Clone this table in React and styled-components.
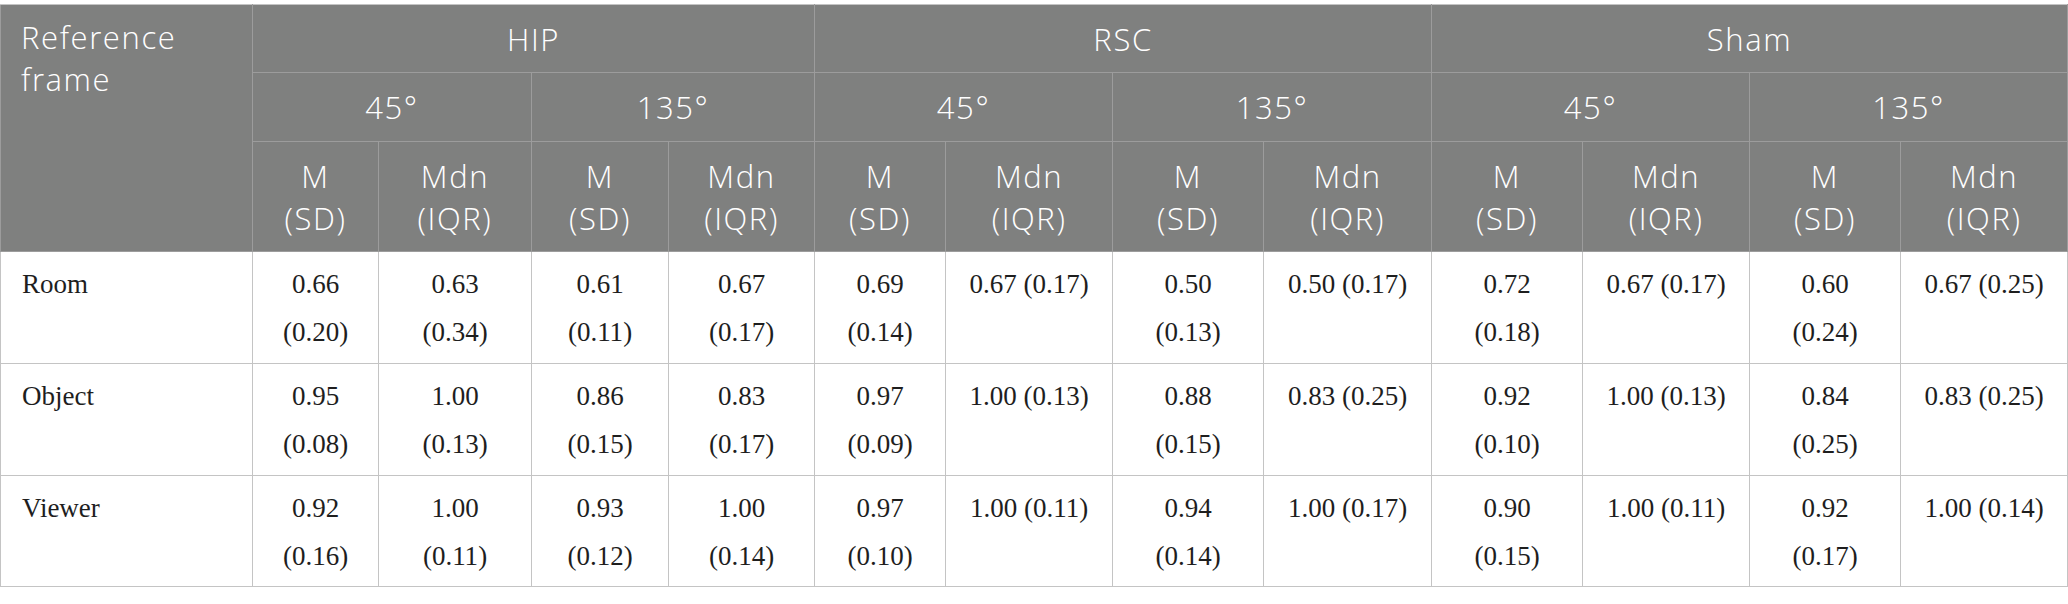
import React from "react";
import styled, { createGlobalStyle } from "styled-components";

const GlobalStyle = createGlobalStyle`
  html, body {
    margin: 0;
    padding: 0;
    background: #ffffff;
  }
  body {
    padding-top: 4px;
  }
`;

const Table = styled.table`
  width: 2067px;
  table-layout: fixed;
  border-collapse: collapse;
  border: 1px solid #c4c4c4;
`;

const HeadRow = styled.tr`
  height: ${(p) => p.$h}px;
`;

const HeadCell = styled.th`
  background: #7f807f;
  color: #ffffff;
  font-family: "Open Sans", "Noto Sans", sans-serif;
  font-weight: 350;
  font-size: 31px;
  letter-spacing: 1.6px;
  line-height: 42px;
  text-align: ${(p) => (p.$left ? "left" : "center")};
  vertical-align: ${(p) => (p.$top ? "top" : "middle")};
  padding: ${(p) => (p.$top ? "11px 20px" : "0 6px")};
  border: 1px solid #9c9c9c;
  border-top-color: #c4c4c4;
`;

const HeadLine = styled.span`
  display: block;
  white-space: nowrap;
`;

const BodyRow = styled.tr`
  height: ${(p) => p.$h}px;
`;

const Cell = styled.td`
  font-family: "Liberation Serif", "Times New Roman", serif;
  font-size: 27px;
  line-height: 48px;
  color: #1e1e1e;
  text-align: ${(p) => (p.$left ? "left" : "center")};
  vertical-align: top;
  padding: 8px 21px 0;
  border: 1px solid #c4c4c4;
`;

const Line = styled.span`
  display: block;
  white-space: nowrap;
`;

const widths = [252, 126, 153, 137, 146, 131, 167, 151, 168, 151, 167, 151, 167];

const groups = ["HIP", "RSC", "Sham"];
const angles = ["45°", "135°"];

const rows = [
  {
    name: "Room",
    values: [
      ["0.66", "0.20"], ["0.63", "0.34"], ["0.61", "0.11"], ["0.67", "0.17"],
      ["0.69", "0.14"], ["0.67", "0.17"], ["0.50", "0.13"], ["0.50", "0.17"],
      ["0.72", "0.18"], ["0.67", "0.17"], ["0.60", "0.24"], ["0.67", "0.25"],
    ],
    h: 112,
  },
  {
    name: "Object",
    values: [
      ["0.95", "0.08"], ["1.00", "0.13"], ["0.86", "0.15"], ["0.83", "0.17"],
      ["0.97", "0.09"], ["1.00", "0.13"], ["0.88", "0.15"], ["0.83", "0.25"],
      ["0.92", "0.10"], ["1.00", "0.13"], ["0.84", "0.25"], ["0.83", "0.25"],
    ],
    h: 112,
  },
  {
    name: "Viewer",
    values: [
      ["0.92", "0.16"], ["1.00", "0.11"], ["0.93", "0.12"], ["1.00", "0.14"],
      ["0.97", "0.10"], ["1.00", "0.11"], ["0.94", "0.14"], ["1.00", "0.17"],
      ["0.90", "0.15"], ["1.00", "0.11"], ["0.92", "0.17"], ["1.00", "0.14"],
    ],
    h: 111,
  },
];

// M (SD) columns and the narrow HIP median columns break onto two lines
const stacked = (i) => i % 2 === 0 || i < 4;

const App = () => {
  return (
    <>
      <GlobalStyle />
      <Table>
        <colgroup>
          {widths.map((w, i) => (
            <col key={i} style={{ width: w }} />
          ))}
        </colgroup>
        <thead>
          <HeadRow $h={68}>
            <HeadCell rowSpan={3} $left $top>
              Reference frame
            </HeadCell>
            {groups.map((g) => (
              <HeadCell key={g} colSpan={4}>
                {g}
              </HeadCell>
            ))}
          </HeadRow>
          <HeadRow $h={69}>
            {groups.map((g) =>
              angles.map((a) => (
                <HeadCell key={g + a} colSpan={2}>
                  {a}
                </HeadCell>
              ))
            )}
          </HeadRow>
          <HeadRow $h={110}>
            {groups.map((g) =>
              angles.map((a) => (
                <React.Fragment key={g + a}>
                  <HeadCell>
                    <HeadLine>M</HeadLine>
                    <HeadLine>(SD)</HeadLine>
                  </HeadCell>
                  <HeadCell>
                    <HeadLine>Mdn</HeadLine>
                    <HeadLine>(IQR)</HeadLine>
                  </HeadCell>
                </React.Fragment>
              ))
            )}
          </HeadRow>
        </thead>
        <tbody>
          {rows.map((r) => (
            <BodyRow key={r.name} $h={r.h}>
              <Cell $left>{r.name}</Cell>
              {r.values.map(([v, s], i) => (
                <Cell key={i}>
                  {stacked(i) ? (
                    <>
                      <Line>{v}</Line>
                      <Line>({s})</Line>
                    </>
                  ) : (
                    <Line>
                      {v} ({s})
                    </Line>
                  )}
                </Cell>
              ))}
            </BodyRow>
          ))}
        </tbody>
      </Table>
    </>
  );
};

export default App;
